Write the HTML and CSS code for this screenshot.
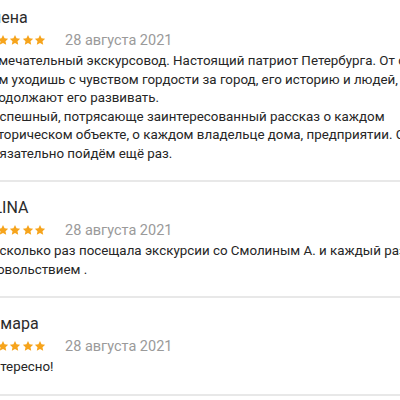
FILE: index.html
```html
<!DOCTYPE html>
<html lang="ru">
<head>
    <meta charset="UTF-8">
    <meta name="viewport" content="width=device-width, initial-scale=1.0">
    <title>Отзывы</title>
    <link rel="stylesheet" href="styles.css">
</head>
<body>
    <svg width="0" height="0" class="defs">
        <symbol id="star" viewBox="0 0 24 24">
            <path d="M12 1.8l3.1 6.6 7.2.9-5.3 5 1.4 7.1L12 17.9l-6.4 3.5 1.4-7.1-5.3-5 7.2-.9z"/>
        </symbol>
    </svg>

    <div class="reviews">
        <div class="review">
            <div class="review-name">Елена</div>
            <div class="review-meta">
                <div class="stars">
                    <svg class="star"><use href="#star"/></svg>
                    <svg class="star"><use href="#star"/></svg>
                    <svg class="star"><use href="#star"/></svg>
                    <svg class="star"><use href="#star"/></svg>
                    <svg class="star"><use href="#star"/></svg>
                </div>
                <span class="review-date">28 августа 2021</span>
            </div>
            <p class="review-text">Замечательный экскурсовод. Настоящий патриот Петербурга. От своих экскурсий<br>ним уходишь с чувством гордости за город, его историю и людей, которые<br>продолжают его развивать.<br>Неспешный, потрясающе заинтересованный рассказ о каждом<br>историческом объекте, о каждом владельце дома, предприятии. Спасибо!<br>Обязательно пойдём ещё раз.</p>
        </div>

        <div class="review">
            <div class="review-name">ALINA</div>
            <div class="review-meta">
                <div class="stars">
                    <svg class="star"><use href="#star"/></svg>
                    <svg class="star"><use href="#star"/></svg>
                    <svg class="star"><use href="#star"/></svg>
                    <svg class="star"><use href="#star"/></svg>
                    <svg class="star"><use href="#star"/></svg>
                </div>
                <span class="review-date">28 августа 2021</span>
            </div>
            <p class="review-text">Несколько раз посещала экскурсии со Смолиным А. и каждый раз с<br>удовольствием .</p>
        </div>

        <div class="review">
            <div class="review-name">Тамара</div>
            <div class="review-meta">
                <div class="stars">
                    <svg class="star"><use href="#star"/></svg>
                    <svg class="star"><use href="#star"/></svg>
                    <svg class="star"><use href="#star"/></svg>
                    <svg class="star"><use href="#star"/></svg>
                    <svg class="star"><use href="#star"/></svg>
                </div>
                <span class="review-date">28 августа 2021</span>
            </div>
            <p class="review-text">Интересно!</p>
        </div>
    </div>
</body>
</html>
```

FILE: styles.css
```css
* {
    margin: 0;
    padding: 0;
    box-sizing: border-box;
}

html, body {
    overflow: hidden;
}

body {
    background: #fff;
    font-family: Roboto, "Liberation Sans", Arial, sans-serif;
    color: #333;
}

.defs {
    position: absolute;
}

.reviews {
    width: 480px;
    margin-left: -17px;
    margin-top: -8px;
}

.review {
    padding: 16px 0 17px;
    border-bottom: 2px solid #e8e8e8;
}

.review-name {
    font-size: 16px;
    line-height: 20px;
    color: #2b2b2b;
}

.review-meta {
    display: flex;
    align-items: center;
    height: 20px;
    margin-top: 2px;
}

.stars {
    display: flex;
    gap: 0.5px;
    margin-left: 1px;
}

.star {
    width: 12px;
    height: 12px;
    fill: #f6a41c;
}

.review-date {
    margin-left: 19px;
    font-size: 14.5px;
    color: #9a9a9a;
}

.review-text {
    margin-top: 2px;
    font-size: 13.35px;
    line-height: 18.5px;
    color: #262626;
    white-space: nowrap;
}
```
